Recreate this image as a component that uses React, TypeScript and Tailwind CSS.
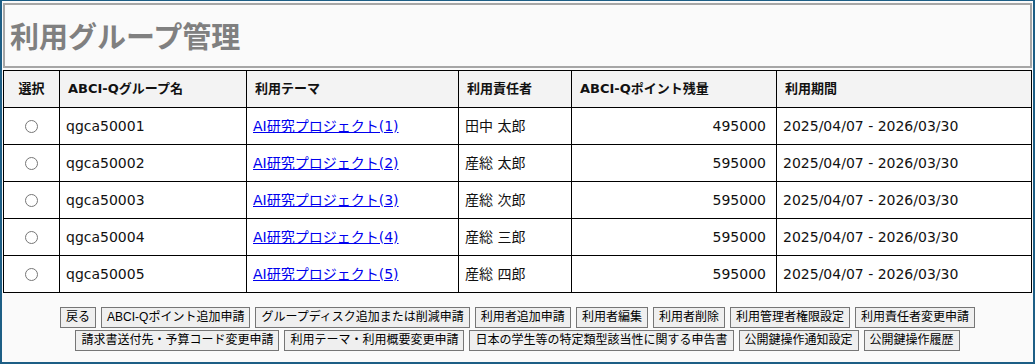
const rows = [
  { id: 'qgca50001', theme: 'AI研究プロジェクト(1)', owner: '田中 太郎', points: 495000 },
  { id: 'qgca50002', theme: 'AI研究プロジェクト(2)', owner: '産総 太郎', points: 595000 },
  { id: 'qgca50003', theme: 'AI研究プロジェクト(3)', owner: '産総 次郎', points: 595000 },
  { id: 'qgca50004', theme: 'AI研究プロジェクト(4)', owner: '産総 三郎', points: 595000 },
  { id: 'qgca50005', theme: 'AI研究プロジェクト(5)', owner: '産総 四郎', points: 595000 },
]

const actions = [
  '戻る',
  'ABCI-Qポイント追加申請',
  'グループディスク追加または削減申請',
  '利用者追加申請',
  '利用者編集',
  '利用者削除',
  '利用管理者権限設定',
  '利用責任者変更申請',
  '請求書送付先・予算コード変更申請',
  '利用テーマ・利用概要変更申請',
  '日本の学生等の特定類型該当性に関する申告書',
  '公開鍵操作通知設定',
  '公開鍵操作履歴',
]

const cell = 'border border-black px-[6px] h-[37px]'
const head = 'border border-black px-[8px] h-[37px] text-left font-bold text-[13px]'

export default function App() {
  return (
    <div className="w-[1035px] h-[364px] bg-[#fafafa] border-x-2 border-b-2 border-t border-[#1d5e85] px-px pt-[2px] font-['DejaVu_Sans','Noto_Sans_CJK_JP',sans-serif] text-[#111]">
      <div className="h-[65px] border-2 border-[#a6a6a6] flex items-center px-[5px]">
        <h1 className="text-[29px] font-bold text-[#808080] font-['Noto_Sans_CJK_JP',sans-serif] leading-none">
          利用グループ管理
        </h1>
      </div>

      <table className="mt-[2px] w-[1029px] border-collapse border border-black text-[14px] table-fixed">
        <colgroup>
          <col className="w-[56px]" />
          <col className="w-[187px]" />
          <col className="w-[212px]" />
          <col className="w-[113px]" />
          <col className="w-[205px]" />
          <col />
        </colgroup>
        <thead>
          <tr className="bg-[#f3f3f3]">
            <th className={head + ' !text-center'}>選択</th>
            <th className={head}>ABCI-Qグループ名</th>
            <th className={head}>利用テーマ</th>
            <th className={head}>利用責任者</th>
            <th className={head}>ABCI-Qポイント残量</th>
            <th className={head}>利用期間</th>
          </tr>
        </thead>
        <tbody className="bg-white">
          {rows.map((r) => (
            <tr key={r.id}>
              <td className={cell + ' text-center'}>
                <input type="radio" name="group" className="w-[13px] h-[13px] align-middle" />
              </td>
              <td className={cell}>{r.id}</td>
              <td className={cell}>
                <a href="#" className="text-[#0000ee] underline">
                  {r.theme}
                </a>
              </td>
              <td className={cell}>{r.owner}</td>
              <td className={cell + ' text-right !pr-[10px]'}>{r.points}</td>
              <td className={cell}>2025/04/07 - 2026/03/30</td>
            </tr>
          ))}
        </tbody>
      </table>

      <div className="mt-[14px] flex flex-wrap justify-center gap-x-[5px] gap-y-[2px] px-[20px]">
        {actions.map((a) => (
          <button
            key={a}
            className="h-[21px] px-[5px] border border-[#767676] bg-[#efefef] text-[12px] leading-[17px] text-black font-['Liberation_Sans','Noto_Sans_CJK_JP',sans-serif]"
          >
            {a}
          </button>
        ))}
      </div>
    </div>
  )
}
